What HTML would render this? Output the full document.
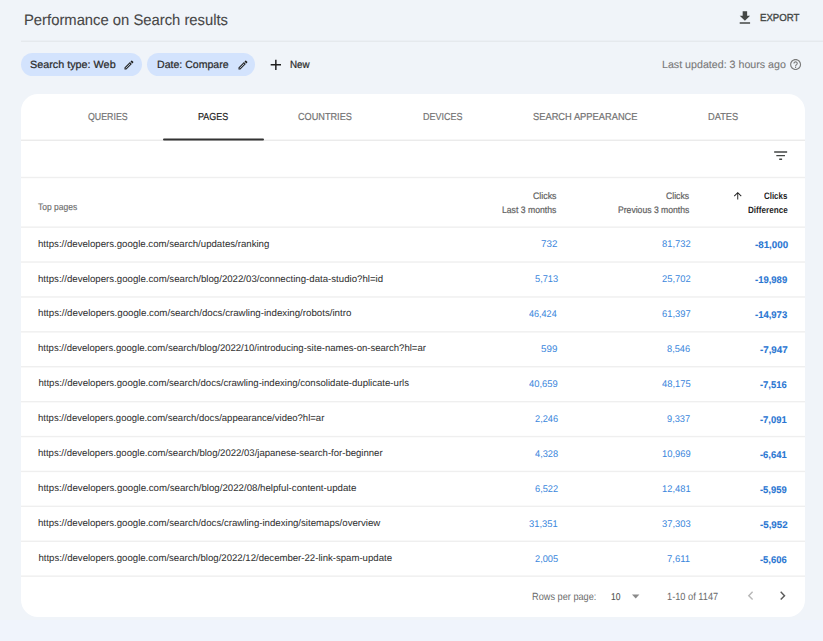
<!DOCTYPE html><html><head><meta charset='utf-8'><style>
html,body{margin:0;padding:0}
body{width:823px;height:641px;overflow:hidden;background:#f0f4f9;position:relative;font-family:"Liberation Sans",sans-serif}
.t{position:absolute;white-space:pre;line-height:1;text-rendering:geometricPrecision;transform-origin:0 0;font-family:"Liberation Sans",sans-serif}
.chip{position:absolute;background:#d3e3fd;border-radius:12px}
.card{position:absolute;left:21px;top:94px;width:784px;height:523px;background:#fff;border-radius:17px}
.band{position:absolute;left:0;top:620px;width:823px;height:21px;background:#f0f4fc}
</style></head><body>
<div class='band'></div><div class='card'></div>
<div class='chip' style='left:21px;top:53px;width:121px;height:23px'></div>
<div class='chip' style='left:147.2px;top:53px;width:108px;height:23px'></div>
<svg style='position:absolute;left:0;top:0' width='823' height='641'><rect x='21' y='40.55' width='802' height='1.4' fill='#e4e8ed'/><rect x='21' y='139.55' width='784' height='1.4' fill='#ebebeb'/><rect x='21' y='176.80' width='784' height='1.4' fill='#efefef'/><rect x='21' y='226.45' width='784' height='1.4' fill='#efefef'/><rect x='21' y='261.35' width='784' height='1.4' fill='#efefef'/><rect x='21' y='296.25' width='784' height='1.4' fill='#efefef'/><rect x='21' y='331.15' width='784' height='1.4' fill='#efefef'/><rect x='21' y='366.05' width='784' height='1.4' fill='#efefef'/><rect x='21' y='400.95' width='784' height='1.4' fill='#efefef'/><rect x='21' y='435.85' width='784' height='1.4' fill='#efefef'/><rect x='21' y='470.75' width='784' height='1.4' fill='#efefef'/><rect x='21' y='505.65' width='784' height='1.4' fill='#efefef'/><rect x='21' y='540.55' width='784' height='1.4' fill='#efefef'/><rect x='21' y='575.45' width='784' height='1.4' fill='#efefef'/></svg>
<svg style='position:absolute;left:0;top:0' width='823' height='641'><rect x='163' y='138.5' width='101' height='2' rx='1' fill='#333'/></svg>

<svg style='position:absolute;left:736.2px;top:9.4px' width='17.8' height='17.8' viewBox='0 0 24 24'><path fill='#444746' d='M19 9h-4V3H9v6H5l7 7 7-7zM5 18v2h14v-2H5z'/></svg>
<svg style='position:absolute;left:771.9px;top:147.3px' width='17.3' height='17.3' viewBox='0 0 24 24'><path fill='#444746' d='M10 18h4v-2h-4v2zM3 6v2h18V6H3zm3 7h12v-2H6v2z'/></svg>
<svg style='position:absolute;left:122.9px;top:58.7px' width='11.9' height='11.9' viewBox='0 0 24 24'><path fill='#1f1f1f' d='M14.06 9.02l.92.92L5.92 19H5v-.92l9.06-9.06M17.66 3c-.25 0-.51.1-.7.29l-1.83 1.83 3.75 3.75 1.83-1.830c.39-.39.39-1.02 0-1.41l-2.34-2.34c-.2-.2-.45-.29-.71-.29zm-3.6 3.19L3 17.25V21h3.75L17.81 9.94l-3.75-3.75z'/></svg>
<svg style='position:absolute;left:236.7px;top:58.7px' width='11.9' height='11.9' viewBox='0 0 24 24'><path fill='#1f1f1f' d='M14.06 9.020l.92.92L5.92 19H5v-.92l9.06-9.06M17.66 3c-.25 0-.51.1-.7.29l-1.83 1.83 3.75 3.75 1.83-1.83c.39-.39.39-1.02 0-1.41l-2.34-2.34c-.2-.2-.45-.29-.71-.29zm-3.6 3.19L3 17.25V21h3.75L17.81 9.94l-3.75-3.75z'/></svg>
<svg style='position:absolute;left:266.9px;top:55.9px' width='17.7' height='17.7' viewBox='0 0 24 24'><path fill='#1f1f1f' d='M19 13h-6v6h-2v-6H5v-2h6V5h2v6h6v2z'/></svg>
<svg style='position:absolute;left:789.1px;top:58.3px' width='13.2' height='13.2' viewBox='0 0 24 24'><path fill='#7a7a7a' d='M11 18h2v-2h-2v2zm1-16C6.48 2 2 6.48 2 12s4.48 10 10 10 10-4.480 10-10S17.52 2 12 2zm0 18c-4.41 0-8-3.59-8-8s3.59-8 8-8 8 3.59 8 8-3.59 8-8 8zm0-14c-2.21 0-4 1.79-4 4h2c0-1.1.9-2 2-2s2 .9 2 2c0 2-3 1.75-3 5h2c0-2.25 3-2.5 3-5 0-2.21-1.79-4-4-4z'/></svg>
<svg style='position:absolute;left:0;top:0' width='823' height='641'><polygon fill='#8a8a8a' points='632.0,594.6 639.4,594.6 635.7,598.4'/></svg>
<svg style='position:absolute;left:741.5px;top:586.5px' width='17.3' height='17.3' viewBox='0 0 24 24'><path fill='#b8b8b8' d='M15.41 7.41L14 6l-6 6 6 6 1.41-1.41L10.83 12z'/></svg>
<svg style='position:absolute;left:773.5px;top:586.5px' width='17.3' height='17.3' viewBox='0 0 24 24'><path fill='#5c5c5c' d='M10 6L8.59 7.41 13.17 12l-4.58 4.59L10 18l6-6z'/></svg>
<svg style='position:absolute;left:731.6px;top:190.3px' width='11.5' height='11.5' viewBox='0 0 24 24'><path fill='#1f1f1f' d='M4 12l1.41 1.41L11 7.83V20h2V7.83l5.58 5.59L20 12l-8-8-8 8z'/></svg>

<div class='t' style='left:23.83px;top:12.70px;font-size:15.3px;font-weight:400;color:#474747;transform:scaleX(0.9676);-webkit-text-stroke:0.1px #474747'>Performance on Search results</div><div class='t' style='left:759.60px;top:14.07px;font-size:10.2px;font-weight:400;color:#444746;transform:scaleX(0.9450);-webkit-text-stroke:0.35px #444746'>EXPORT</div><div class='t' style='left:29.70px;top:59.63px;font-size:10.5px;font-weight:400;color:#2a2a2a;transform:scaleX(1.0284);-webkit-text-stroke:0.22px #2a2a2a'>Search type: Web</div><div class='t' style='left:156.80px;top:59.63px;font-size:10.5px;font-weight:400;color:#2a2a2a;transform:scaleX(1.0062);-webkit-text-stroke:0.22px #2a2a2a'>Date: Compare</div><div class='t' style='left:290.00px;top:59.63px;font-size:10.5px;font-weight:400;color:#2a2a2a;transform:scaleX(0.9336);-webkit-text-stroke:0.22px #2a2a2a'>New</div><div class='t' style='left:661.90px;top:60.42px;font-size:10.6px;font-weight:400;color:#787878;transform:scaleX(1.0064);-webkit-text-stroke:0.1px #787878'>Last updated: 3 hours ago</div><div class='t' style='left:87.90px;top:113.18px;font-size:10.1px;font-weight:400;color:#747474;transform:scaleX(0.8731);-webkit-text-stroke:0.2px #747474'>QUERIES</div><div class='t' style='left:198.00px;top:113.18px;font-size:10.1px;font-weight:400;color:#1f1f1f;transform:scaleX(0.8863);-webkit-text-stroke:0.2px #1f1f1f'>PAGES</div><div class='t' style='left:298.30px;top:113.18px;font-size:10.1px;font-weight:400;color:#747474;transform:scaleX(0.9060);-webkit-text-stroke:0.2px #747474'>COUNTRIES</div><div class='t' style='left:422.60px;top:113.18px;font-size:10.1px;font-weight:400;color:#747474;transform:scaleX(0.8905);-webkit-text-stroke:0.2px #747474'>DEVICES</div><div class='t' style='left:532.50px;top:113.18px;font-size:10.1px;font-weight:400;color:#747474;transform:scaleX(0.9226);-webkit-text-stroke:0.2px #747474'>SEARCH APPEARANCE</div><div class='t' style='left:708.00px;top:113.18px;font-size:10.1px;font-weight:400;color:#747474;transform:scaleX(0.9165);-webkit-text-stroke:0.2px #747474'>DATES</div><div class='t' style='left:38.40px;top:202.17px;font-size:9.4px;font-weight:400;color:#6e6e6e;transform:scaleX(0.9042);-webkit-text-stroke:0.15px #6e6e6e'>Top pages</div><div class='t' style='left:533.30px;top:191.27px;font-size:9.4px;font-weight:400;color:#616161;transform:scaleX(0.9364);-webkit-text-stroke:0.2px #616161'>Clicks</div><div class='t' style='left:502.40px;top:204.57px;font-size:9.4px;font-weight:400;color:#616161;transform:scaleX(0.9223);-webkit-text-stroke:0.2px #616161'>Last 3 months</div><div class='t' style='left:666.30px;top:191.27px;font-size:9.4px;font-weight:400;color:#616161;transform:scaleX(0.9205);-webkit-text-stroke:0.2px #616161'>Clicks</div><div class='t' style='left:618.00px;top:204.57px;font-size:9.4px;font-weight:400;color:#616161;transform:scaleX(0.9185);-webkit-text-stroke:0.2px #616161'>Previous 3 months</div><div class='t' style='left:764.40px;top:191.47px;font-size:9.4px;font-weight:700;color:#1f1f1f;transform:scaleX(0.8428);-webkit-text-stroke:0px #1f1f1f'>Clicks</div><div class='t' style='left:747.90px;top:206.30px;font-size:9.2px;font-weight:700;color:#1f1f1f;transform:scaleX(0.8835);-webkit-text-stroke:0px #1f1f1f'>Difference</div><div class='t' style='left:38.40px;top:239.60px;font-size:9.6px;font-weight:400;color:#333333;transform:scaleX(1.0041);-webkit-text-stroke:0.05px #333333'>https://developers.google.com/search/updates/ranking</div><div class='t' style='left:541.25px;top:240.38px;font-size:9.7px;font-weight:400;color:#3a86dc;transform:scaleX(1.0111);-webkit-text-stroke:0px #3a86dc'>732</div><div class='t' style='left:661.75px;top:240.38px;font-size:9.7px;font-weight:400;color:#3a86dc;transform:scaleX(0.9661);-webkit-text-stroke:0px #3a86dc'>81,732</div><div class='t' style='left:754.65px;top:241.18px;font-size:9.7px;font-weight:700;color:#2a76d2;transform:scaleX(1.0087);-webkit-text-stroke:0.1px #2a76d2'>-81,000</div><div class='t' style='left:38.40px;top:274.53px;font-size:9.6px;font-weight:400;color:#333333;transform:scaleX(1.0053);-webkit-text-stroke:0.05px #333333'>https://developers.google.com/search/blog/2022/03/connecting-data-studio?hl=id</div><div class='t' style='left:534.50px;top:275.31px;font-size:9.7px;font-weight:400;color:#3a86dc;transform:scaleX(0.9516);-webkit-text-stroke:0px #3a86dc'>5,713</div><div class='t' style='left:661.75px;top:275.31px;font-size:9.7px;font-weight:400;color:#3a86dc;transform:scaleX(0.9661);-webkit-text-stroke:0px #3a86dc'>25,702</div><div class='t' style='left:754.65px;top:276.11px;font-size:9.7px;font-weight:700;color:#2a76d2;transform:scaleX(0.9785);-webkit-text-stroke:0.1px #2a76d2'>-19,989</div><div class='t' style='left:38.40px;top:309.46px;font-size:9.6px;font-weight:400;color:#333333;transform:scaleX(1.0113);-webkit-text-stroke:0.05px #333333'>https://developers.google.com/search/docs/crawling-indexing/robots/intro</div><div class='t' style='left:528.95px;top:310.24px;font-size:9.7px;font-weight:400;color:#3a86dc;transform:scaleX(0.9341);-webkit-text-stroke:0px #3a86dc'>46,424</div><div class='t' style='left:661.75px;top:310.24px;font-size:9.7px;font-weight:400;color:#3a86dc;transform:scaleX(0.9661);-webkit-text-stroke:0px #3a86dc'>61,397</div><div class='t' style='left:754.65px;top:311.04px;font-size:9.7px;font-weight:700;color:#2a76d2;transform:scaleX(0.9785);-webkit-text-stroke:0.1px #2a76d2'>-14,973</div><div class='t' style='left:38.40px;top:344.39px;font-size:9.6px;font-weight:400;color:#333333;transform:scaleX(0.9943);-webkit-text-stroke:0.05px #333333'>https://developers.google.com/search/blog/2022/10/introducing-site-names-on-search?hl=ar</div><div class='t' style='left:541.25px;top:345.17px;font-size:9.7px;font-weight:400;color:#3a86dc;transform:scaleX(1.0111);-webkit-text-stroke:0px #3a86dc'>599</div><div class='t' style='left:667.30px;top:345.17px;font-size:9.7px;font-weight:400;color:#3a86dc;transform:scaleX(0.9516);-webkit-text-stroke:0px #3a86dc'>8,546</div><div class='t' style='left:760.20px;top:345.97px;font-size:9.7px;font-weight:700;color:#2a76d2;transform:scaleX(1.0044);-webkit-text-stroke:0.1px #2a76d2'>-7,947</div><div class='t' style='left:38.40px;top:379.32px;font-size:9.6px;font-weight:400;color:#333333;-webkit-text-stroke:0.05px #333333'>https://developers.google.com/search/docs/crawling-indexing/consolidate-duplicate-urls</div><div class='t' style='left:528.95px;top:380.10px;font-size:9.7px;font-weight:400;color:#3a86dc;transform:scaleX(0.9661);-webkit-text-stroke:0px #3a86dc'>40,659</div><div class='t' style='left:661.75px;top:380.10px;font-size:9.7px;font-weight:400;color:#3a86dc;transform:scaleX(0.9661);-webkit-text-stroke:0px #3a86dc'>48,175</div><div class='t' style='left:760.20px;top:380.90px;font-size:9.7px;font-weight:700;color:#2a76d2;transform:scaleX(0.9686);-webkit-text-stroke:0.1px #2a76d2'>-7,516</div><div class='t' style='left:38.40px;top:414.25px;font-size:9.6px;font-weight:400;color:#333333;transform:scaleX(0.9932);-webkit-text-stroke:0.05px #333333'>https://developers.google.com/search/docs/appearance/video?hl=ar</div><div class='t' style='left:534.50px;top:415.03px;font-size:9.7px;font-weight:400;color:#3a86dc;transform:scaleX(0.9516);-webkit-text-stroke:0px #3a86dc'>2,246</div><div class='t' style='left:667.30px;top:415.03px;font-size:9.7px;font-weight:400;color:#3a86dc;transform:scaleX(0.9516);-webkit-text-stroke:0px #3a86dc'>9,337</div><div class='t' style='left:760.20px;top:415.83px;font-size:9.7px;font-weight:700;color:#2a76d2;transform:scaleX(0.9686);-webkit-text-stroke:0.1px #2a76d2'>-7,091</div><div class='t' style='left:38.40px;top:449.18px;font-size:9.6px;font-weight:400;color:#333333;transform:scaleX(0.9956);-webkit-text-stroke:0.05px #333333'>https://developers.google.com/search/blog/2022/03/japanese-search-for-beginner</div><div class='t' style='left:534.50px;top:449.96px;font-size:9.7px;font-weight:400;color:#3a86dc;transform:scaleX(0.9516);-webkit-text-stroke:0px #3a86dc'>4,328</div><div class='t' style='left:661.75px;top:449.96px;font-size:9.7px;font-weight:400;color:#3a86dc;transform:scaleX(0.9661);-webkit-text-stroke:0px #3a86dc'>10,969</div><div class='t' style='left:760.20px;top:450.76px;font-size:9.7px;font-weight:700;color:#2a76d2;transform:scaleX(0.9686);-webkit-text-stroke:0.1px #2a76d2'>-6,641</div><div class='t' style='left:38.40px;top:484.11px;font-size:9.6px;font-weight:400;color:#333333;transform:scaleX(1.0082);-webkit-text-stroke:0.05px #333333'>https://developers.google.com/search/blog/2022/08/helpful-content-update</div><div class='t' style='left:534.50px;top:484.89px;font-size:9.7px;font-weight:400;color:#3a86dc;transform:scaleX(0.9516);-webkit-text-stroke:0px #3a86dc'>6,522</div><div class='t' style='left:661.75px;top:484.89px;font-size:9.7px;font-weight:400;color:#3a86dc;transform:scaleX(0.9661);-webkit-text-stroke:0px #3a86dc'>12,481</div><div class='t' style='left:760.20px;top:485.69px;font-size:9.7px;font-weight:700;color:#2a76d2;transform:scaleX(0.9686);-webkit-text-stroke:0.1px #2a76d2'>-5,959</div><div class='t' style='left:38.40px;top:519.04px;font-size:9.6px;font-weight:400;color:#333333;transform:scaleX(1.0046);-webkit-text-stroke:0.05px #333333'>https://developers.google.com/search/docs/crawling-indexing/sitemaps/overview</div><div class='t' style='left:528.95px;top:519.82px;font-size:9.7px;font-weight:400;color:#3a86dc;transform:scaleX(0.9661);-webkit-text-stroke:0px #3a86dc'>31,351</div><div class='t' style='left:661.75px;top:519.82px;font-size:9.7px;font-weight:400;color:#3a86dc;transform:scaleX(0.9661);-webkit-text-stroke:0px #3a86dc'>37,303</div><div class='t' style='left:760.20px;top:520.62px;font-size:9.7px;font-weight:700;color:#2a76d2;transform:scaleX(1.0044);-webkit-text-stroke:0.1px #2a76d2'>-5,952</div><div class='t' style='left:38.40px;top:553.97px;font-size:9.6px;font-weight:400;color:#333333;-webkit-text-stroke:0.05px #333333'>https://developers.google.com/search/blog/2022/12/december-22-link-spam-update</div><div class='t' style='left:534.50px;top:554.75px;font-size:9.7px;font-weight:400;color:#3a86dc;transform:scaleX(0.9516);-webkit-text-stroke:0px #3a86dc'>2,005</div><div class='t' style='left:667.30px;top:554.75px;font-size:9.7px;font-weight:400;color:#3a86dc;transform:scaleX(0.9812);-webkit-text-stroke:0px #3a86dc'>7,611</div><div class='t' style='left:760.20px;top:555.55px;font-size:9.7px;font-weight:700;color:#2a76d2;transform:scaleX(0.9686);-webkit-text-stroke:0.1px #2a76d2'>-5,606</div><div class='t' style='left:531.90px;top:592.94px;font-size:10.4px;font-weight:400;color:#6b6b6b;transform:scaleX(0.8847);-webkit-text-stroke:0px #6b6b6b'>Rows per page:</div><div class='t' style='left:610.60px;top:592.70px;font-size:10.0px;font-weight:400;color:#505050;transform:scaleX(0.8476);-webkit-text-stroke:0.1px #505050'>10</div><div class='t' style='left:667.00px;top:592.94px;font-size:10.4px;font-weight:400;color:#6b6b6b;transform:scaleX(0.8893);-webkit-text-stroke:0px #6b6b6b'>1-10 of 1147</div>
</body></html>
